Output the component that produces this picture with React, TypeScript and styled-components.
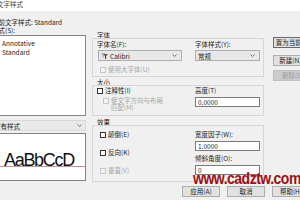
import styled, { createGlobalStyle } from "styled-components";

const GlobalStyle = createGlobalStyle`
  html, body { margin: 0; padding: 0; }
  body {
    background: #f0f0f0;
    font-family: "Noto Sans CJK SC", "Noto Sans", sans-serif;
    font-size: 6.5px;
    color: #1b1b1b;
  }
  #root { width: 300px; height: 200px; overflow: hidden; position: relative; }
`;

const Dialog = styled.div`
  width: 340px;
  margin-left: -13px;
  display: flex;
  flex-direction: column;
`;

const TitleBar = styled.div`
  height: 11px;
  background: #fff;
  padding-left: 10px;
  line-height: 9px;
  color: #444;
`;

const Body = styled.div`
  display: grid;
  grid-template-columns: 94px 172px 48px;
  column-gap: 6px;
  padding: 6px 0 0 5px;
`;

const LeftCol = styled.div`
  display: flex;
  flex-direction: column;
`;

const TextLine = styled.div<{ $top?: number }>`
  line-height: 8px;
  margin-top: ${(p) => p.$top ?? 0}px;
  white-space: nowrap;
`;

const ListBox = styled.div`
  height: 81px;
  margin-top: 1px;
  box-sizing: border-box;
  border: 1px solid #868686;
  background: #fff;
  padding: 3px 0 0 9px;
`;

const ListItem = styled.div`
  line-height: 9px;
`;

const Dropdown = styled.div`
  height: 11px;
  margin-top: 4px;
  box-sizing: border-box;
  border: 1px solid #d8d8d8;
  background: #e9e9e9;
  display: flex;
  align-items: center;
  padding: 0 3px 0 1px;
`;

const Grow = styled.span`
  flex: 1;
  white-space: nowrap;
`;

const Preview = styled.div`
  height: 48px;
  margin-top: 2px;
  box-sizing: border-box;
  border: 1px solid #828282;
  background: #fff;
  padding-top: 18px;
  overflow: hidden;
`;

const Sample = styled.div`
  font-family: "Liberation Sans", Arial, sans-serif;
  font-size: 18px;
  letter-spacing: -1.3px;
  line-height: 16px;
  height: 14px;
  border-bottom: 1px solid #c49494;
  padding-left: 11px;
  color: #111;
`;

const MidCol = styled.div`
  padding-top: 15px;
  display: flex;
  flex-direction: column;
`;

const GroupTitle = styled.div<{ $top?: number }>`
  line-height: 6px;
  padding-left: 5px;
  margin-top: ${(p) => p.$top ?? 0}px;
`;

const GroupBox = styled.div<{ $h: number; $pt: number }>`
  height: ${(p) => p.$h}px;
  box-sizing: border-box;
  border: 1px solid #d6d6d6;
  padding: ${(p) => p.$pt}px 3px 0 4px;
  display: grid;
  grid-template-columns: 98px 65px;
  align-content: start;
`;

const Stack = styled.div`
  display: flex;
  flex-direction: column;
`;

const Label = styled.div<{ $top?: number }>`
  line-height: 7px;
  margin-top: ${(p) => p.$top ?? 0}px;
  white-space: nowrap;
`;

const Combo = styled.div<{ $width: number; $left?: number }>`
  width: ${(p) => p.$width}px;
  height: 11px;
  margin: 2px 0 0 ${(p) => p.$left ?? 0}px;
  box-sizing: border-box;
  border: 1px solid #adadad;
  background: #e8e8e8;
  display: flex;
  align-items: center;
  gap: 2px;
  padding: 0 4px 0 2px;
`;

const Field = styled.div`
  height: 10px;
  margin-top: 3px;
  box-sizing: border-box;
  border: 1px solid #7a7a7a;
  background: #fff;
  line-height: 8px;
  padding-left: 2px;
`;

const CheckRow = styled.div<{ $disabled?: boolean; $top?: number; $indent?: number }>`
  display: flex;
  align-items: flex-start;
  gap: 2px;
  line-height: 7px;
  margin-top: ${(p) => p.$top ?? 0}px;
  margin-left: ${(p) => p.$indent ?? 0}px;
  color: ${(p) => (p.$disabled ? "#a6a6a6" : "#1b1b1b")};
`;

const CheckBox = styled.span<{ $disabled?: boolean }>`
  flex: none;
  width: 6px;
  height: 6px;
  margin-top: 0.5px;
  box-sizing: border-box;
  border: 1px solid ${(p) => (p.$disabled ? "#c6c6c6" : "#333")};
  background: ${(p) => (p.$disabled ? "#f5f5f5" : "#fff")};
`;

const RightCol = styled.div`
  padding: 20px 0 0 3px;
  display: flex;
  flex-direction: column;
`;

const Button = styled.div<{ $disabled?: boolean; $strong?: boolean; $top?: number; $w: number }>`
  width: ${(p) => p.$w}px;
  height: 11px;
  margin-top: ${(p) => p.$top ?? 0}px;
  box-sizing: border-box;
  border: 1px solid ${(p) => (p.$disabled ? "#bfbfbf" : p.$strong ? "#6a6a6a" : "#adadad")};
  background: ${(p) => (p.$disabled ? "#cccccc" : "#e1e1e1")};
  color: ${(p) => (p.$disabled ? "#9d9d9d" : "#1b1b1b")};
  text-align: center;
  line-height: 9px;
  white-space: nowrap;
  flex: none;
`;

const Footer = styled.div`
  grid-column: 2 / 4;
  display: flex;
  gap: 7px;
  margin-top: 4px;
  padding-left: 90px;
`;

const Watermark = styled.div`
  position: absolute;
  left: 193px;
  top: 172px;
  font-family: "Liberation Sans", Arial, sans-serif;
  font-weight: bold;
  font-size: 14px;
  line-height: 14px;
  letter-spacing: -0.5px;
  color: #9b1014;
  white-space: nowrap;
  transform: scaleY(1.2);
  transform-origin: left bottom;
`;

function Chevron() {
  return (
    <svg width="5" height="3" viewBox="0 0 5 3">
      <polyline points="0.5,0.5 2.5,2.5 4.5,0.5" fill="none" stroke="#555" strokeWidth="0.8" />
    </svg>
  );
}

function TrueTypeIcon() {
  return (
    <svg width="7" height="6" viewBox="0 0 7 6">
      <path d="M0.5 0.8H4M2.2 0.8V4.5" stroke="#999" strokeWidth="1" fill="none" />
      <path d="M2.8 1.8H6.5M4.6 1.8V5.8" stroke="#222" strokeWidth="1" fill="none" />
    </svg>
  );
}

function Check({ label, disabled, top, indent }: { label: React.ReactNode; disabled?: boolean; top?: number; indent?: number }) {
  return (
    <CheckRow $disabled={disabled} $top={top} $indent={indent}>
      <CheckBox $disabled={disabled} />
      <span>{label}</span>
    </CheckRow>
  );
}

export default function App() {
  return (
    <>
      <GlobalStyle />
      <Dialog>
        <TitleBar>文字样式</TitleBar>
        <Body>
          <LeftCol>
            <TextLine $top={1}>当前文字样式: Standard</TextLine>
            <TextLine>样式(S):</TextLine>
            <ListBox>
              <ListItem>Annotative</ListItem>
              <ListItem>Standard</ListItem>
            </ListBox>
            <Dropdown>
              <Grow>所有样式</Grow>
              <Chevron />
            </Dropdown>
            <Preview>
              <Sample>AaBbCcD</Sample>
            </Preview>
          </LeftCol>

          <MidCol>
            <GroupTitle>字体</GroupTitle>
            <GroupBox $h={39} $pt={2}>
              <Stack>
                <Label>字体名(F):</Label>
                <Combo $width={84} $left={1}>
                  <TrueTypeIcon />
                  <Grow>Calibri</Grow>
                  <Chevron />
                </Combo>
                <Check label="使用大字体(U)" disabled top={5} indent={3} />
              </Stack>
              <Stack>
                <Label>字体样式(Y):</Label>
                <Combo $width={65}>
                  <Grow>常规</Grow>
                  <Chevron />
                </Combo>
              </Stack>
            </GroupBox>

            <GroupTitle $top={2}>大小</GroupTitle>
            <GroupBox $h={31} $pt={1}>
              <Stack>
                <Check label="注释性(I)" />
                <Check
                  label={
                    <>
                      使文字方向与布局
                      <br />
                      匹配(M)
                    </>
                  }
                  disabled
                  top={3}
                  indent={6}
                />
              </Stack>
              <Stack>
                <Label>高度(T)</Label>
                <Field>0.0000</Field>
              </Stack>
            </GroupBox>

            <GroupTitle $top={3}>效果</GroupTitle>
            <GroupBox $h={57} $pt={5}>
              <Stack>
                <Check label="颠倒(E)" indent={3} />
                <Check label="反向(K)" top={11} indent={3} />
                <Check label="垂直(V)" disabled top={11} indent={3} />
              </Stack>
              <Stack>
                <Label>宽度因子(W):</Label>
                <Field>1.0000</Field>
                <Label $top={4}>倾斜角度(O):</Label>
                <Field>0</Field>
              </Stack>
            </GroupBox>
          </MidCol>

          <RightCol>
            <Button $w={40} $strong>置为当前(C)</Button>
            <Button $w={40} $top={7}>新建(N)...</Button>
            <Button $w={40} $top={4} $disabled>删除(D)</Button>
          </RightCol>

          <Footer>
            <Button $w={38}>应用(A)</Button>
            <Button $w={38}>取消</Button>
            <Button $w={38}>帮助(H)</Button>
          </Footer>
        </Body>
      </Dialog>
      <Watermark>www.cadztw.com</Watermark>
    </>
  );
}
